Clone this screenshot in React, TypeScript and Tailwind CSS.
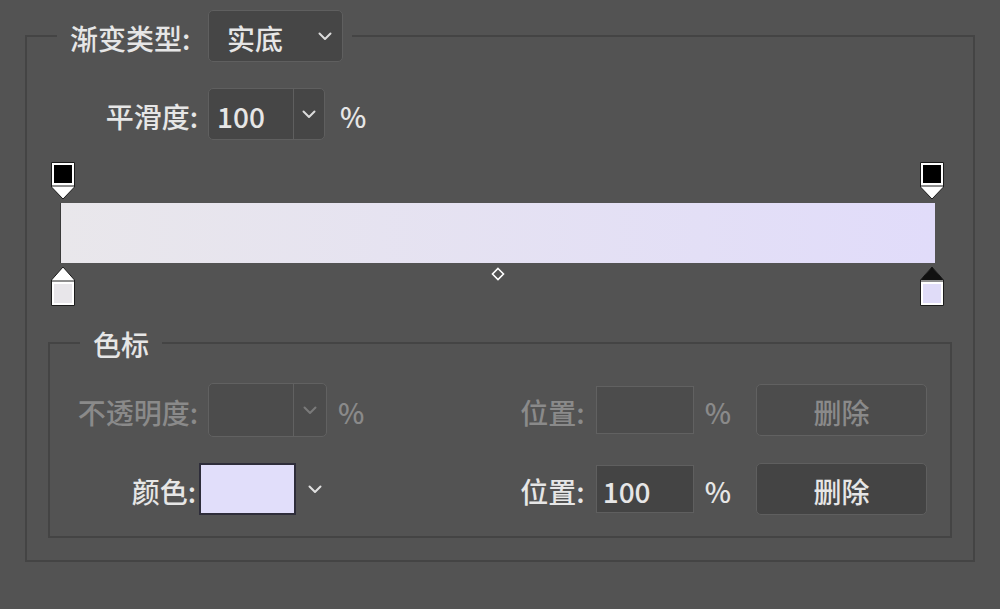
import React from 'react';

const font = { fontFamily: '"Noto Sans CJK SC", "Noto Sans", sans-serif' };
const txt = 'leading-none pt-[4px] whitespace-nowrap';

function Chevron({ className = '' }: { className?: string }) {
  return (
    <svg width="14" height="9" viewBox="0 0 14 9" className={className}>
      <polyline points="1.5,1.5 7,7 12.5,1.5" fill="none" stroke="currentColor" strokeWidth="2" strokeLinecap="round" strokeLinejoin="round" />
    </svg>
  );
}

// stop marker above the bar (opacity stop)
function TopStop() {
  return (
    <svg width="24" height="38" viewBox="0 0 24 38">
      <path d="M0.5 0.5 H23.5 V25 L12 37 L0.5 25 Z" fill="#fff" stroke="#1c1c1c" />
      <rect x="3" y="3" width="18" height="18" fill="#000" />
      <line x1="0.5" y1="24" x2="23.5" y2="24" stroke="#1c1c1c" />
    </svg>
  );
}

// stop marker below the bar (colour stop)
function BottomStop({ fill, selected }: { fill: string; selected?: boolean }) {
  return (
    <svg width="24" height="40" viewBox="0 0 24 40">
      <path d="M12 1 L23.5 14 V39.5 H0.5 V14 Z" fill="#fff" stroke="#1c1c1c" />
      {selected && <path d="M12 1 L23.5 14 H0.5 Z" fill="#111" />}
      <line x1="0.5" y1="15" x2="23.5" y2="15" stroke="#1c1c1c" />
      <rect x="3" y="18" width="18" height="19" fill={fill} />
    </svg>
  );
}

export default function App() {
  return (
    <div className="w-[1000px] h-[609px] bg-[#535353] pt-[10px] pl-[25px] text-[28px] font-medium text-[#e6e6e6]" style={font}>
      <fieldset className="w-[950px] border-2 border-[#444444] pb-[22px]">
        <legend className="ml-[30px] pl-[13px] pr-[9px]">
          <div className="flex items-center">
            <span className={`w-[125px] ${txt}`}>渐变类型:</span>
            <div className="ml-[13px] flex items-center w-[135px] h-[52px] rounded-[5px] bg-[#464646] border border-[#5f5f5f] pl-[18px] pr-[10px]">
              <span className={txt}>实底</span>
              <Chevron className="ml-auto text-[#dcdcdc]" />
            </div>
          </div>
        </legend>

        <div className="mt-[26px] flex items-center h-[52px]">
          <span className={`w-[171px] text-right ${txt}`}>平滑度:</span>
          <div className="ml-[10px] flex w-[117px] h-[52px] rounded-[5px] bg-[#464646] border border-[#5f5f5f]">
            <div className="w-[84px] pl-[8px] flex items-center">
              <span className={txt}>100</span>
            </div>
            <div className="flex-1 flex items-center justify-center border-l border-[#5f5f5f]">
              <Chevron className="text-[#dcdcdc]" />
            </div>
          </div>
          <span className={`ml-[15px] ${txt}`}>%</span>
        </div>

        <div className="mt-[22px] ml-[24px] w-[893px] flex flex-col">
          <div className="flex justify-between h-[38px]">
            <TopStop />
            <TopStop />
          </div>
          <div className="mt-[3px] mx-[9px] h-[60px] bg-gradient-to-r from-[#e9e7eb] to-[#e1dcfa] border-l border-[#3a3a3a]" />
          <div className="mt-[3px] flex justify-between items-start h-[40px]">
            <BottomStop fill="#e8e6ea" />
            <svg width="14" height="14" viewBox="0 0 14 14" className="mt-[1px]">
              <path d="M7 1.5 L12.5 7 L7 12.5 L1.5 7 Z" fill="none" stroke="#fff" strokeWidth="1.6" />
            </svg>
            <BottomStop fill="#e0dcf8" selected />
          </div>
        </div>

        <fieldset className="mt-[19px] mx-[21px] border-2 border-[#444444] pb-[21px]">
          <legend className="ml-[30px] px-[13px] leading-[33px] pt-[3px]">色标</legend>

          <div className="mt-[22px] flex items-center h-[54px] text-[#8a8a8a]">
            <span className={`w-[148px] text-right ${txt}`}>不透明度:</span>
            <div className="ml-[10px] flex w-[119px] h-[54px] rounded-[5px] bg-[#4c4c4c] border border-[#616161]">
              <span className="w-[84px]" />
              <div className="flex-1 flex items-center justify-center border-l border-[#616161]">
                <Chevron className="text-[#7a7a7a]" />
              </div>
            </div>
            <span className={`ml-[11px] ${txt}`}>%</span>

            <div className="ml-auto pr-[23px] flex items-center">
              <span className={txt}>位置:</span>
              <div className="ml-[11px] w-[98px] h-[48px] bg-[#4c4c4c] border border-[#616161]" />
              <span className={`ml-[11px] ${txt}`}>%</span>
              <div className="ml-[25px] w-[171px] h-[52px] rounded-[5px] bg-[#4c4c4c] border border-[#616161] flex items-center justify-center">
                <span className={txt}>删除</span>
              </div>
            </div>
          </div>

          <div className="mt-[26px] flex items-center h-[52px]">
            <span className={`w-[146px] text-right ${txt}`}>颜色:</span>
            <div className="ml-[3px] w-[97px] h-[52px] bg-[#e1defa] border-2 border-[#2e2d3a]" />
            <Chevron className="ml-[12px] text-[#e0e0e0]" />

            <div className="ml-auto pr-[23px] flex items-center">
              <span className={txt}>位置:</span>
              <div className="ml-[11px] w-[98px] h-[48px] bg-[#444444] border border-[#5f5f5f] flex items-center pl-[6px]">
                <span className={txt}>100</span>
              </div>
              <span className={`ml-[11px] ${txt}`}>%</span>
              <div className="ml-[25px] w-[171px] h-[52px] rounded-[5px] bg-[#444444] border border-[#5f5f5f] flex items-center justify-center">
                <span className={txt}>删除</span>
              </div>
            </div>
          </div>
        </fieldset>
      </fieldset>
    </div>
  );
}
